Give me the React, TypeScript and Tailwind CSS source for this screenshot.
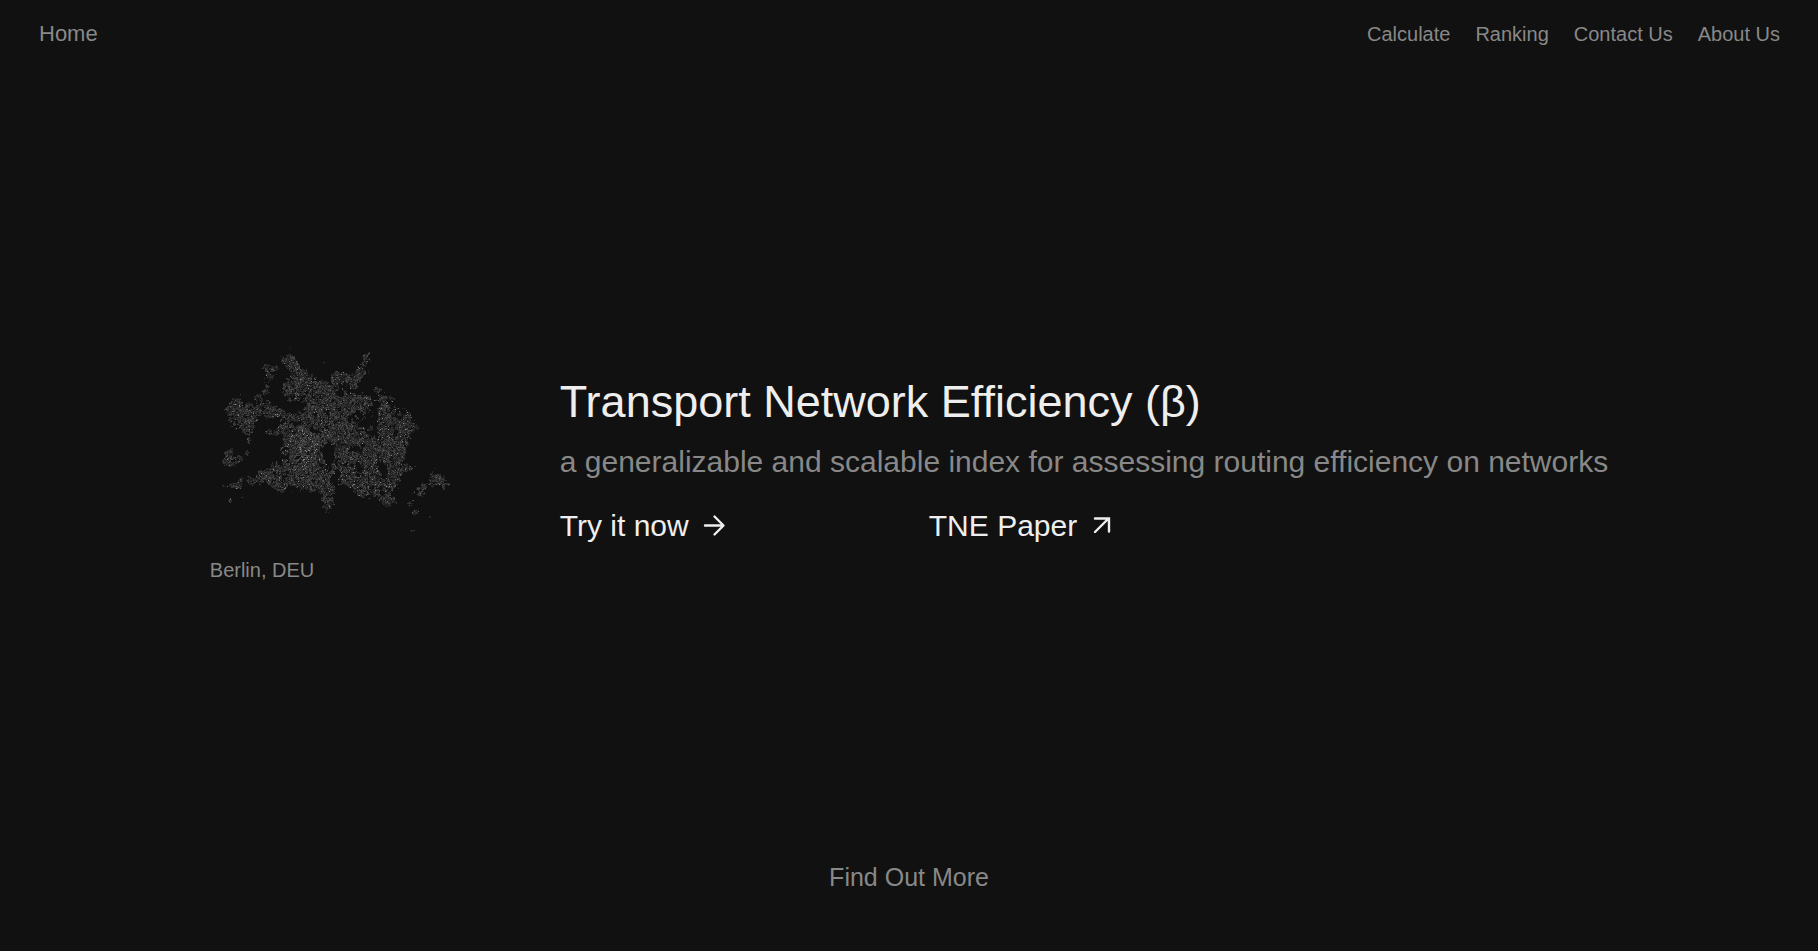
import { useMemo } from "react";

type Blob = [cx: number, cy: number, rx: number, ry: number, weight: number];

interface NavItem {
  label: string;
  href: string;
}

const NAV_ITEMS: NavItem[] = [
  { label: "Calculate", href: "#calculate" },
  { label: "Ranking", href: "#ranking" },
  { label: "Contact Us", href: "#contact" },
  { label: "About Us", href: "#about" }
];

// Built-up areas of the city, three units to a pixel
const DISTRICTS: Blob[] = [
  [265, 82, 28, 19, 1.1], [285, 110, 24, 25, 0.8], [318, 130, 22, 20, 0.7], [208, 115, 25, 29, 1],
  [195, 172, 16, 18, 0.8], [262, 170, 26, 32, 0.9], [302, 170, 30, 36, 0.6], [108, 242, 33, 44, 1],
  [150, 245, 34, 38, 0.7], [172, 210, 17, 34, 0.8], [205, 232, 17, 30, 0.8], [140, 285, 18, 22, 0.8],
  [235, 240, 28, 18, 0.7], [268, 260, 24, 16, 0.7], [212, 300, 24, 12, 0.8], [245, 292, 28, 18, 0.8],
  [85, 362, 13, 14, 1.1], [88, 388, 22, 20, 1], [118, 380, 13, 11, 0.9], [140, 360, 8, 11, 0.8],
  [145, 325, 7, 22, 0.8], [105, 460, 22, 11, 0.9], [120, 445, 10, 12, 0.8], [155, 446, 22, 16, 0.8],
  [190, 434, 29, 23, 0.8], [230, 425, 38, 30, 0.7], [235, 462, 20, 18, 0.8], [285, 345, 50, 58, 1],
  [320, 340, 32, 54, 1], [350, 200, 42, 52, 0.7], [408, 215, 46, 50, 0.8], [385, 290, 68, 50, 0.8],
  [290, 425, 62, 50, 0.9], [350, 425, 48, 46, 0.8], [381, 495, 28, 44, 1], [425, 375, 34, 44, 1],
  [412, 135, 24, 24, 0.9], [455, 140, 29, 24, 0.8], [482, 118, 17, 17, 0.9], [495, 78, 19, 20, 0.8],
  [375, 160, 26, 18, 0.6], [460, 210, 28, 34, 0.6], [497, 215, 30, 36, 0.8], [558, 205, 22, 16, 0.9],
  [553, 260, 24, 62, 0.8], [605, 275, 38, 42, 1], [635, 286, 22, 11, 0.6], [601, 345, 27, 34, 0.9],
  [560, 340, 28, 34, 0.7], [515, 350, 26, 26, 0.9], [468, 300, 42, 34, 0.7], [500, 405, 22, 34, 0.8],
  [465, 385, 30, 32, 0.7], [580, 390, 26, 34, 0.8], [625, 408, 19, 13, 0.9], [450, 440, 32, 22, 0.8],
  [478, 470, 27, 32, 0.9], [535, 470, 32, 36, 0.8], [565, 505, 24, 18, 1], [582, 445, 22, 34, 0.8],
  [512, 440, 30, 20, 0.7], [705, 440, 28, 22, 1], [662, 475, 25, 19, 1], [628, 515, 12, 12, 1],
  [645, 541, 10, 8, 1], [638, 597, 10, 8, 0.9], [738, 455, 11, 5, 0.8], [727, 468, 8, 9, 0.8],
  [66, 458, 6, 8, 0.6], [88, 505, 8, 9, 0.7], [530, 172, 13, 12, 0.8], [371, 95, 8, 10, 0.6],
  [268, 47, 10, 4, 0.5], [690, 553, 9, 4, 0.7], [125, 495, 10, 4, 0.6], [208, 372, 9, 6, 0.5],
  [430, 90, 60, 20, 0.2], [330, 245, 45, 30, 0.5], [520, 400, 70, 60, 0.25], [540, 300, 70, 70, 0.2],
  [345, 390, 24, 40, 0.8]
];

// Parks, lakes and the airfield
const OPEN_LAND: Blob[] = [
  [383, 365, 15, 18, 1.2], [401, 438, 11, 9, 0.8], [490, 270, 14, 9, 0.5], [290, 222, 18, 9, 0.6],
  [338, 296, 12, 6, 0.6], [465, 352, 16, 8, 0.5], [524, 262, 6, 26, 0.6], [583, 310, 5, 25, 0.3],
  [548, 405, 14, 15, 0.4], [425, 185, 10, 12, 0.3], [475, 410, 10, 12, 0.4], [280, 272, 18, 5, 0.4],
  [200, 350, 34, 30, 1], [430, 505, 20, 26, 1], [225, 200, 14, 18, 0.6]
];

const SHADES = ["#1d1d1d", "#282828", "#343434", "#444444", "#5c5c5c", "#868686"];

function hash(x: number, y: number) {
  let h = Math.imul(x, 374761393) + Math.imul(y, 668265263);
  h = Math.imul(h ^ (h >>> 13), 1274126177);
  return ((h ^ (h >>> 16)) >>> 0) / 4294967296;
}

function smoothNoise(x: number, y: number) {
  const ix = Math.floor(x);
  const iy = Math.floor(y);
  const fx = x - ix;
  const fy = y - iy;
  const top = hash(ix, iy) * (1 - fx) + hash(ix + 1, iy) * fx;
  const bottom = hash(ix, iy + 1) * (1 - fx) + hash(ix + 1, iy + 1) * fx;
  return top * (1 - fy) + bottom * fy;
}

function density(blobs: Blob[], x: number, y: number) {
  return blobs.reduce((sum, [cx, cy, rx, ry, weight]) => {
    const square = ((x - cx) / rx) ** 2 + ((y - cy) / ry) ** 2;
    return sum + weight * Math.exp(-square * 1.1);
  }, 0);
}

function buildStreets() {
  const paths = SHADES.map(() => "");
  for (let y = 10; y < 206; y++) {
    for (let x = 16; x < 254; x++) {
      const total = density(DISTRICTS, x * 3, y * 3);
      const built = Math.min(0.64 + total * 0.06, total) - density(OPEN_LAND, x * 3, y * 3);
      const coarse = smoothNoise(x / 4 + 90, y / 4);
      const fine = smoothNoise(x / 2 + 30, y / 2 + 60);
      if (built < coarse * 0.5 + fine * 0.5) {
        continue;
      }
      const core = Math.exp(-(((x - 103) / 16) ** 2) - ((y - 116) / 18) ** 2);
      const value = smoothNoise(x / 2, y / 2 + 40) * 0.4 + hash(x + 500, y) * 0.5 + built * 0.22 + core * 0.12;
      if (value < 0.34) {
        continue;
      }
      const sparkle = hash(x, y + 900) + core * 0.04;
      let shade = Math.min(3, Math.floor((value - 0.34) / 0.15));
      if (sparkle > 0.95) shade = 4;
      if (sparkle > 0.992) shade = 5;
      paths[shade] += `M${x} ${y}h1v1h-1z`;
    }
  }
  return paths;
}

function StreetMap() {
  const paths = useMemo(buildStreets, []);

  return (
    <svg viewBox="10 0 250 220" className="h-[220px] w-[250px]" shapeRendering="crispEdges" role="img" aria-label="Berlin, DEU">
      {paths.map((d, index) => (
        <path key={SHADES[index]} d={d} fill={SHADES[index]} />
      ))}
    </svg>
  );
}

function ArrowRight() {
  return (
    <svg viewBox="0 0 28 28" className="size-7" fill="none" stroke="currentColor" strokeWidth="2.4" strokeLinecap="round" strokeLinejoin="round" aria-hidden="true">
      <path d="M4 13.5h18M13.5 4.5l9 9-9 9" />
    </svg>
  );
}

function ArrowTopRight() {
  return (
    <svg viewBox="0 0 28 28" className="size-7" fill="none" stroke="currentColor" strokeWidth="2.4" strokeLinecap="round" strokeLinejoin="miter" aria-hidden="true">
      <path d="M6 20 19.5 6.5M6 6.5h14v13" />
    </svg>
  );
}

export default function App() {
  return (
    <div className="flex min-h-screen flex-col bg-[#111111] font-['Liberation_Sans',Arial,sans-serif] text-[#eeeeee]">
      <header className="flex items-center justify-between py-4 pr-[38px] pl-[39px] text-[#888888]">
        <a href="#home" className="text-[22px] leading-9">
          Home
        </a>
        <nav className="flex gap-[25px] text-xl leading-9">
          {NAV_ITEMS.map((item) => (
            <a key={item.href} href={item.href}>
              {item.label}
            </a>
          ))}
        </nav>
      </header>

      <main className="flex flex-1 items-center justify-center gap-[100px]">
        <figure className="pb-2">
          <StreetMap />
          <figcaption className="text-xl leading-9 text-[#888888]">Berlin, DEU</figcaption>
        </figure>
        <section>
          <h1 className="text-[45px] leading-[60px]">Transport Network Efficiency (β)</h1>
          <p className="text-3xl leading-[60px] text-[#888888]">
            a generalizable and scalable index for assessing routing efficiency on networks
          </p>
          <div className="mt-1 grid grid-cols-[369px_1fr] text-3xl leading-[60px]">
            <a href="#calculate" className="flex items-center gap-3">
              Try it now
              <ArrowRight />
            </a>
            <a href="#paper" className="flex items-center gap-3">
              TNE Paper
              <ArrowTopRight />
            </a>
          </div>
        </section>
      </main>

      <footer className="flex justify-center pb-14">
        <a href="#more" className="text-[25px] leading-9 text-[#888888]">
          Find Out More
        </a>
      </footer>
    </div>
  );
}
